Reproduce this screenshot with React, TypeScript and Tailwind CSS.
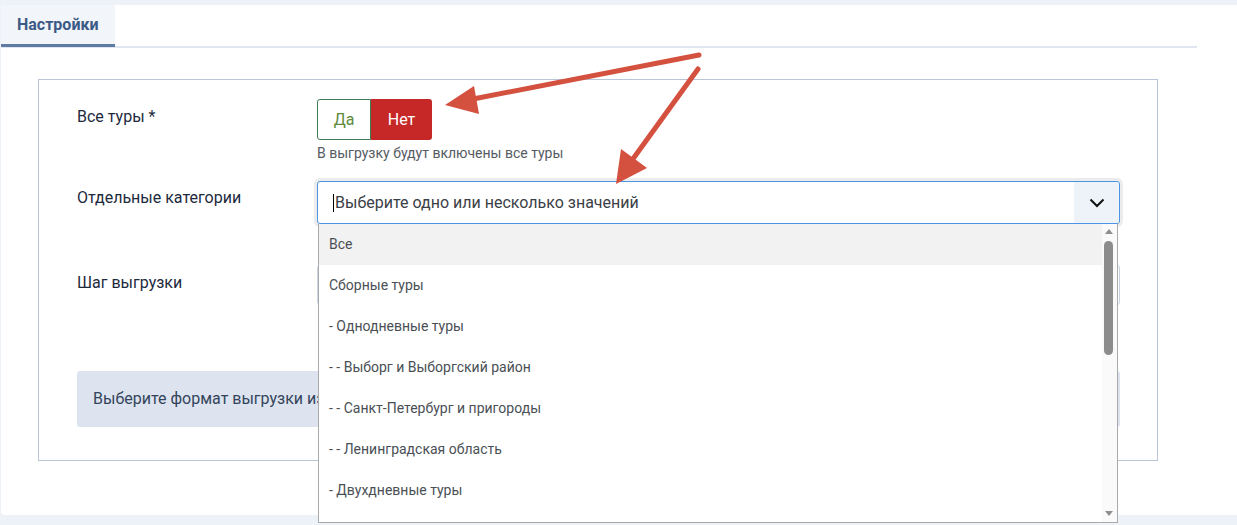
import React from "react";

const items = [
  "Все",
  "Сборные туры",
  "- Однодневные туры",
  "- - Выборг и Выборгский район",
  "- - Санкт-Петербург и пригороды",
  "- - Ленинградская область",
  "- Двухдневные туры",
];

export default function App() {
  return (
    <div
      className="relative w-[1237px] h-[525px] overflow-hidden bg-[#edf1f8] pt-[5px] pl-[1px]"
      style={{ fontFamily: "Roboto, 'Noto Sans', sans-serif" }}
    >
      <div className="h-[510px] bg-white rounded-bl-[4px] pr-[40px]">
        {/* tabs */}
        <div className="flex border-b-[2px] border-[#dfe6f1] h-[43px]">
          <div className="h-[42px] px-[16px] bg-[#f2f5f9] border-b-[3px] border-[#5f7aa3] flex items-center text-[16px] font-bold text-[#3c5a86]">
            Настройки
          </div>
        </div>

        {/* fieldset */}
        <div className="ml-[37px] mt-[31px] w-[1120px] h-[382px] border border-[#b9c6da] pl-[38px] pr-[37px] pt-[19px]">
          {/* row 1 */}
          <div className="flex">
            <div className="w-[240px] pt-[6px] text-[16px] text-[#1d2a3d]">Все туры *</div>
            <div>
              <div className="flex h-[41px] w-[115px]">
                <div className="w-[54px] flex items-center justify-center border border-[#3f7d55] rounded-l-[3px] text-[16px] text-[#5d8a3b]">
                  Да
                </div>
                <div className="flex-1 flex items-center justify-center bg-[#c62828] rounded-r-[3px] text-[16px] text-white">
                  Нет
                </div>
              </div>
              <div className="mt-[5px] text-[14px] text-[#555b63] leading-[16px]">
                В выгрузку будут включены все туры
              </div>
            </div>
          </div>

          {/* row 2 */}
          <div className="flex mt-[20px]">
            <div className="w-[240px] pt-[5px] text-[16px] text-[#1d2a3d]">Отдельные категории</div>
            <div className="relative flex-1">
              <div className="h-[43px] border border-[#4c94e4] rounded-[3px] shadow-[0_0_0_3px_#ececec] flex items-stretch bg-white">
                <div className="flex-1 flex items-center pl-[15px] text-[16px] text-[#3b4046]">
                  <span className="w-[1px] h-[18px] bg-black mr-[1px]" />
                  Выберите одно или несколько значений
                </div>
                <div className="w-[45px] bg-[#eef3fa] flex items-center justify-center rounded-r-[3px]">
                  <svg width="16" height="10" viewBox="0 0 16 10" fill="none">
                    <path d="M1.5 1.5 L8 8 L14.5 1.5" stroke="#111" strokeWidth="2" />
                  </svg>
                </div>
              </div>

              {/* dropdown list */}
              <div className="absolute z-10 left-[1px] top-[43px] w-[800px] h-[299px] overflow-hidden bg-white border border-[#aaaaaa] border-t-0 flex">
                <div className="flex-1">
                  {items.map((it, i) => (
                    <div
                      key={it}
                      className={`h-[41px] flex items-center pl-[10px] text-[14px] text-[#4a4f55] ${
                        i === 0 ? "bg-[#f2f2f2]" : ""
                      }`}
                    >
                      {it}
                    </div>
                  ))}
                </div>
                <div className="w-[15px] bg-[#fafafa] relative">
                  <div className="absolute left-[3px] top-[5px] w-0 h-0 border-l-[4px] border-r-[4px] border-b-[5px] border-l-transparent border-r-transparent border-b-[#8e8e8e]" />
                  <div className="absolute left-[2px] top-[17px] w-[9px] h-[114px] rounded-[5px] bg-[#8c8c8c]" />
                  <div className="absolute left-[3px] bottom-[6px] w-0 h-0 border-l-[4px] border-r-[4px] border-t-[5px] border-l-transparent border-r-transparent border-t-[#8e8e8e]" />
                </div>
              </div>
            </div>
          </div>

          {/* row 3 */}
          <div className="flex mt-[41px]">
            <div className="w-[240px] pt-[6px] text-[16px] text-[#1d2a3d]">Шаг выгрузки</div>
            <div className="flex-1 h-[40px] border border-[#c9d3e2] rounded-[3px]" />
          </div>

          {/* alert */}
          <div className="mt-[66px] h-[56px] bg-[#dde4ef] rounded-[3px] flex items-center pl-[16px] text-[16px] text-[#34445c]">
            Выберите формат выгрузки из списка
          </div>
        </div>
      </div>

      {/* annotation arrows */}
      <svg className="absolute left-0 top-0 pointer-events-none z-20" width="1237" height="525">
        <line x1="699" y1="55" x2="468" y2="100" stroke="#d4503f" strokeWidth="5" strokeLinecap="round" />
        <polygon points="445,105 474,86 479,114" fill="#d4503f" />
        <line x1="698" y1="69" x2="630" y2="163" stroke="#d4503f" strokeWidth="5" strokeLinecap="round" />
        <polygon points="616,184 621,149 647,168" fill="#d4503f" />
      </svg>
    </div>
  );
}
